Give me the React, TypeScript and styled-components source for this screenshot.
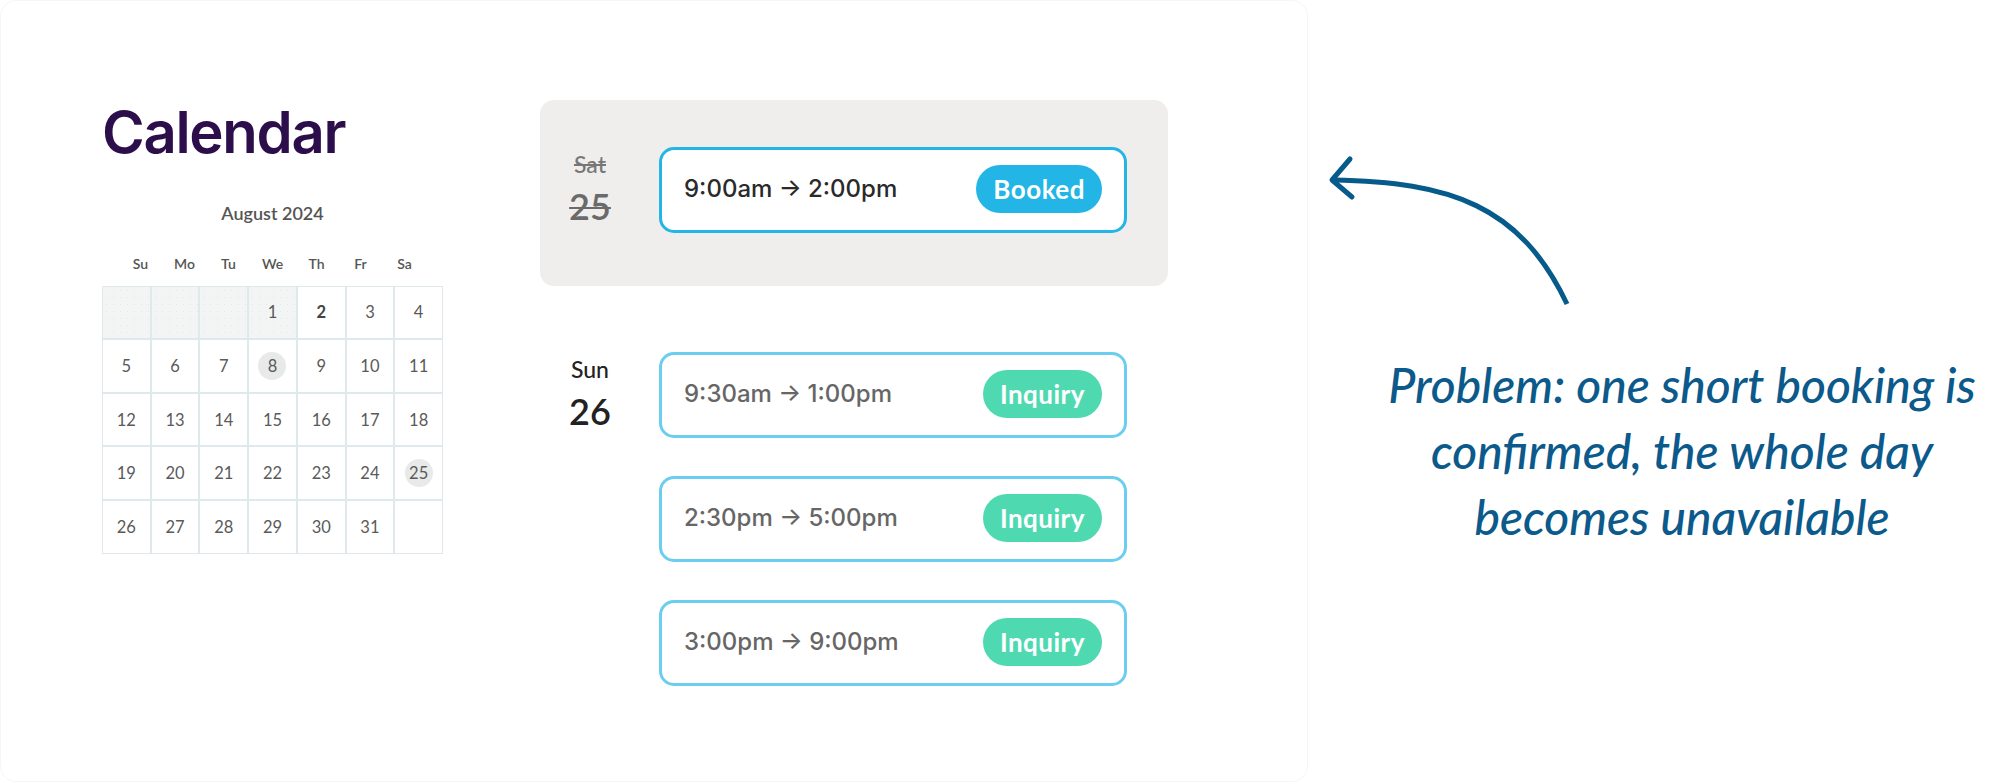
import styled, { createGlobalStyle } from "styled-components";

const GlobalStyle = createGlobalStyle`
  html, body {
    margin: 0;
    padding: 0;
    background: #ffffff;
  }
  body {
    font-family: Lato, "Noto Sans", sans-serif;
  }
`;

const Page = styled.div`
  display: flex;
  width: 1992px;
  height: 782px;
  overflow: hidden;
`;

const Card = styled.main`
  box-sizing: border-box;
  flex: 0 0 1308px;
  height: 782px;
  border: 1px solid #f6f6f6;
  border-radius: 16px;
  display: flex;
  gap: 97px;
  padding: 99px 0 0 101px;
`;

const CalendarColumn = styled.section`
  width: 341px;
  display: flex;
  flex-direction: column;
`;

const Title = styled.h1`
  margin: -2px 0 0;
  font-family: Inter, "Liberation Sans", sans-serif;
  font-size: 58px;
  line-height: 1.2;
  font-weight: 600;
  letter-spacing: -1.3px;
  color: #2c0e4b;
`;

const MonthLabel = styled.div`
  margin-top: 33px;
  text-align: center;
  font-size: 18px;
  line-height: 24px;
  font-weight: 600;
  color: #555555;
`;

const WeekHeader = styled.div`
  display: grid;
  grid-template-columns: repeat(7, 44px);
  justify-content: center;
  margin-top: 29px;
  font-size: 14px;
  line-height: 20px;
  font-weight: 600;
  color: #555555;
  text-align: center;
`;

const Grid = styled.div`
  display: grid;
  grid-template-columns: repeat(7, 1fr);
  grid-auto-rows: 51.6px;
  gap: 2px;
  margin-top: 12px;
  border: 1px solid #dfe9eb;
  background: #dfe9eb;
`;

const Cell = styled.div<{ $disabled?: boolean }>`
  display: flex;
  align-items: center;
  justify-content: center;
  background: ${(p) =>
    p.$disabled
      ? "radial-gradient(#e2e7e7 0.7px, transparent 0.9px) 0 0 / 7px 7px, #f3f5f5"
      : "#ffffff"};
`;

const DayNumber = styled.span<{ $marked?: boolean; $strong?: boolean }>`
  display: flex;
  align-items: center;
  justify-content: center;
  width: 28px;
  height: 28px;
  border-radius: 50%;
  background: ${(p) => (p.$marked ? "#e8e9e9" : "transparent")};
  font-size: 16.5px;
  font-weight: ${(p) => (p.$strong ? 700 : 400)};
  color: ${(p) => (p.$strong ? "#444444" : "#5a5a5a")};
`;

const ScheduleColumn = styled.section`
  width: 628px;
  display: flex;
  flex-direction: column;
  gap: 19px;
`;

const DayGroup = styled.div<{ $active?: boolean }>`
  display: flex;
  padding: 47px 41px 53px 22px;
  border-radius: 14px;
  background: ${(p) => (p.$active ? "#efeeec" : "transparent")};
`;

const DayLabel = styled.div`
  flex: 0 0 56px;
  padding-top: 4px;
  text-align: center;
`;

const DayName = styled.div<{ $struck?: boolean }>`
  font-size: 23px;
  line-height: 26px;
  font-weight: 500;
  color: ${(p) => (p.$struck ? "#777777" : "#222222")};
  text-decoration: ${(p) => (p.$struck ? "line-through" : "none")};
  text-decoration-thickness: 2px;
`;

const DayNum = styled.div<{ $struck?: boolean }>`
  margin-top: 9px;
  font-size: 36px;
  line-height: 40px;
  font-weight: 600;
  color: ${(p) => (p.$struck ? "#6a6a6a" : "#222222")};
  text-decoration: ${(p) => (p.$struck ? "line-through" : "none")};
  text-decoration-thickness: 2px;
`;

const Slots = styled.div`
  margin-left: 41px;
  width: 468px;
  display: flex;
  flex-direction: column;
  gap: 38px;
`;

const Slot = styled.div<{ $booked?: boolean }>`
  box-sizing: border-box;
  height: 86px;
  display: flex;
  align-items: center;
  justify-content: space-between;
  padding: 0 22px 3px;
  background: #ffffff;
  border: 3px solid ${(p) => (p.$booked ? "#22b5e5" : "#6bcdf0")};
  border-radius: 15px;
`;

const TimeRange = styled.span<{ $booked?: boolean }>`
  font-family: Inter, "Liberation Sans", sans-serif;
  font-size: 24px;
  font-weight: 500;
  color: ${(p) => (p.$booked ? "#2a2a2a" : "#666666")};
`;

const Pill = styled.span<{ $booked?: boolean }>`
  display: flex;
  align-items: center;
  height: 48px;
  padding: 0 17px;
  border-radius: 24px;
  background: ${(p) => (p.$booked ? "#23b5e5" : "#4fd9b1")};
  color: #ffffff;
  font-size: 26px;
  font-weight: 700;
  letter-spacing: 0.5px;
`;

const Annotation = styled.aside`
  flex: 1;
  display: flex;
  flex-direction: column;
  padding: 150px 0 0 14px;
`;

const ArrowSvg = styled.svg`
  display: block;
  width: 260px;
  height: 165px;
`;

const ProblemText = styled.p`
  margin: 37px 0 0;
  padding-left: 50px;
  text-align: center;
  white-space: nowrap;
  font-size: 48px;
  line-height: 66px;
  font-style: italic;
  font-weight: 500;
  color: #0b5a8b;
`;

type SlotData = { time: string; status: "Booked" | "Inquiry" };

const days: { name: string; num: number; active: boolean; slots: SlotData[] }[] = [
  { name: "Sat", num: 25, active: true, slots: [{ time: "9:00am → 2:00pm", status: "Booked" }] },
  {
    name: "Sun",
    num: 26,
    active: false,
    slots: [
      { time: "9:30am → 1:00pm", status: "Inquiry" },
      { time: "2:30pm → 5:00pm", status: "Inquiry" },
      { time: "3:00pm → 9:00pm", status: "Inquiry" },
    ],
  },
];

const weekdays = ["Su", "Mo", "Tu", "We", "Th", "Fr", "Sa"];

const cells: (number | null)[] = [
  null,
  null,
  null,
  ...Array.from({ length: 31 }, (_, i) => i + 1),
  null,
];

export default function App() {
  return (
    <>
      <GlobalStyle />
      <Page>
        <Card>
          <CalendarColumn>
            <Title>Calendar</Title>
            <MonthLabel>August 2024</MonthLabel>
            <WeekHeader>
              {weekdays.map((d) => (
                <span key={d}>{d}</span>
              ))}
            </WeekHeader>
            <Grid>
              {cells.map((n, i) => (
                <Cell key={i} $disabled={i < 4}>
                  {n !== null && (
                    <DayNumber $marked={n === 8 || n === 25} $strong={n === 2}>
                      {n}
                    </DayNumber>
                  )}
                </Cell>
              ))}
            </Grid>
          </CalendarColumn>

          <ScheduleColumn>
            {days.map((day) => (
              <DayGroup key={day.num} $active={day.active}>
                <DayLabel>
                  <DayName $struck={day.active}>{day.name}</DayName>
                  <DayNum $struck={day.active}>{day.num}</DayNum>
                </DayLabel>
                <Slots>
                  {day.slots.map((s) => (
                    <Slot key={s.time} $booked={s.status === "Booked"}>
                      <TimeRange $booked={s.status === "Booked"}>{s.time}</TimeRange>
                      <Pill $booked={s.status === "Booked"}>{s.status}</Pill>
                    </Slot>
                  ))}
                </Slots>
              </DayGroup>
            ))}
          </ScheduleColumn>
        </Card>

        <Annotation>
          <ArrowSvg viewBox="0 0 260 165">
            <path
              d="M245 154 C198 55, 128 32, 11 30"
              fill="none"
              stroke="#075b8b"
              strokeWidth="5"
            />
            <path
              d="M28 9 L10 30 L30 47"
              fill="none"
              stroke="#075b8b"
              strokeWidth="5"
              strokeLinecap="round"
              strokeLinejoin="round"
            />
          </ArrowSvg>
          <ProblemText>
            Problem: one short booking is
            <br />
            confirmed, the whole day
            <br />
            becomes unavailable
          </ProblemText>
        </Annotation>
      </Page>
    </>
  );
}
